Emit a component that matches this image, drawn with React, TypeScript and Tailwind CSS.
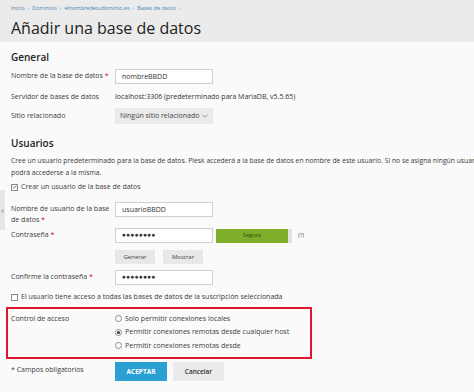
import React from "react";

const Check = ({ checked }: { checked?: boolean }) => (
  <span className="w-[7px] h-[7px] border border-[#8a8a8a] bg-white flex items-center justify-center shrink-0">
    {checked && (
      <svg width="6" height="6" viewBox="0 0 6 6">
        <path d="M0.8 3 L2.4 4.6 L5.3 1.2" stroke="#555" strokeWidth="0.9" fill="none" />
      </svg>
    )}
  </span>
);

const Radio = ({ checked }: { checked?: boolean }) => (
  <span className="w-[7px] h-[7px] rounded-full border border-[#8a8a8a] bg-white flex items-center justify-center shrink-0">
    {checked && <span className="w-[3px] h-[3px] rounded-full bg-[#333]" />}
  </span>
);

const Input = ({ value, pwd }: { value: string; pwd?: boolean }) => (
  <div className="w-[98px] h-[15px] border border-[#cfcfcf] bg-white flex items-center px-[6px] text-[7px] text-[#333] leading-none whitespace-nowrap shrink-0">
    {pwd ? <span className="tracking-[0.3px] text-[6.5px]">●●●●●●●●</span> : value}
  </div>
);

export default function App() {
  return (
    <div className="w-[474px] h-[392px] bg-[#fafafa] overflow-hidden relative font-['Open_Sans',sans-serif] text-[#3a3a3a] whitespace-nowrap">
      <div className="h-[42px] bg-[#ebebeb] px-[11px] pt-[4px]">
        <div className="h-[9px] leading-[9px] text-[5.5px] text-[#4a86b5] flex gap-[3px]">
          <span>Inicio</span><span className="text-[#999]">›</span>
          <span>Dominios</span><span className="text-[#999]">›</span>
          <span>elnombredetudominio.es</span><span className="text-[#999]">›</span>
          <span>Bases de datos</span><span className="text-[#999]">›</span>
        </div>
        <div className="mt-[2px] text-[16px] leading-[26px] text-[#222]">Añadir una base de datos</div>
      </div>

      <div className="px-[11px] text-[7px]">
        <div className="mt-[8px] h-[14px] leading-[14px] text-[10px] font-semibold text-[#222]">General</div>

        <div className="mt-[4px] h-[16px] flex items-center">
          <div className="w-[104px] shrink-0">Nombre de la base de datos <span className="text-[#d0021b]">*</span></div>
          <Input value="nombreBBDD" />
        </div>
        <div className="mt-[5px] h-[16px] flex items-center">
          <div className="w-[104px] shrink-0">Servidor de bases de datos</div>
          <div className="text-[#333]">localhost:3306 (predeterminado para MariaDB, v5.5.65)</div>
        </div>
        <div className="mt-[3px] h-[16px] flex items-center">
          <div className="w-[104px] shrink-0">Sitio relacionado</div>
          <div className="w-[98px] h-[16px] bg-[#ebebeb] flex items-center justify-between px-[5px] text-[#444]">
            <span>Ningún sitio relacionado</span>
            <svg width="6" height="4" viewBox="0 0 6 4"><path d="M0.5 0.8 L3 3.2 L5.5 0.8" stroke="#777" strokeWidth="0.7" fill="none" /></svg>
          </div>
        </div>

        <div className="mt-[12px] h-[14px] leading-[14px] text-[10px] font-semibold text-[#222]">Usuarios</div>
        <div className="mt-[5px] leading-[12px] text-[6.8px]">
          Cree un usuario predeterminado para la base de datos. Plesk accederá a la base de datos en nombre de este usuario. Si no se asigna ningún usuario no
          <br />podrá accederse a la misma.
        </div>
        <div className="mt-[2px] h-[12px] flex items-center gap-[3px]">
          <Check checked />
          <span>Crear un usuario de la base de datos</span>
        </div>

        <div className="mt-[9px] h-[24px] flex items-start">
          <div className="w-[104px] shrink-0 leading-[11px] pt-[1px]">Nombre de usuario de la base<br />de datos <span className="text-[#d0021b]">*</span></div>
          <Input value="usuarioBBDD" />
        </div>
        <div className="mt-[2px] h-[15px] flex items-center">
          <div className="w-[104px] shrink-0">Contraseña <span className="text-[#d0021b]">*</span></div>
          <Input value="" pwd />
          <div className="ml-[3px] w-[76px] h-[14px] bg-[#e3e3e3] flex shrink-0">
            <div className="w-[72px] h-[14px] bg-[#7cae2a] flex items-center justify-center text-[5.5px] text-[#2f4a0c]">Segura</div>
          </div>
          <span className="ml-[6px] text-[6px] text-[#555]">(?)</span>
        </div>
        <div className="mt-[7px] h-[14px] flex items-center">
          <div className="w-[104px] shrink-0" />
          <div className="w-[40px] h-[14px] bg-[#e8e8e8] flex items-center justify-center text-[6px] text-[#444]">Generar</div>
          <div className="ml-[8px] w-[40px] h-[14px] bg-[#e8e8e8] flex items-center justify-center text-[6px] text-[#444]">Mostrar</div>
        </div>
        <div className="mt-[6px] h-[15px] flex items-center">
          <div className="w-[104px] shrink-0">Confirme la contraseña <span className="text-[#d0021b]">*</span></div>
          <Input value="" pwd />
        </div>
        <div className="mt-[6px] h-[12px] flex items-center gap-[3px]">
          <Check />
          <span>El usuario tiene acceso a todas las bases de datos de la suscripción seleccionada</span>
        </div>

        <div className="mt-[4px] -ml-[5px] w-[306px] h-[52px] border-2 border-[#e0142b] pl-[3px] pt-[3px] flex">
          <div className="w-[104px] shrink-0 h-[13.5px] flex items-center">Control de acceso</div>
          <div className="flex flex-col">
            <div className="h-[13.5px] flex items-center gap-[3px]"><Radio /><span>Solo permitir conexiones locales</span></div>
            <div className="h-[13.5px] flex items-center gap-[3px]"><Radio checked /><span>Permitir conexiones remotas desde cualquier host</span></div>
            <div className="h-[13.5px] flex items-center gap-[3px]"><Radio /><span>Permitir conexiones remotas desde</span></div>
          </div>
        </div>

        <div className="mt-[3px] flex items-start">
          <div className="w-[104px] shrink-0 pt-[3px]">* Campos obligatorios</div>
          <div className="w-[52px] h-[19px] bg-[#2aa0d5] flex items-center justify-center text-white font-bold text-[6.5px]">ACEPTAR</div>
          <div className="ml-[6px] w-[51px] h-[19px] bg-[#eaeaea] flex items-center justify-center text-[#333] font-semibold text-[6.5px]">Cancelar</div>
        </div>
      </div>

      <div className="absolute left-0 top-[190px] w-[5px] h-[40px] bg-[#e6e6e6] flex items-center justify-center text-[8px] text-[#555] leading-none">‹</div>
    </div>
  );
}
